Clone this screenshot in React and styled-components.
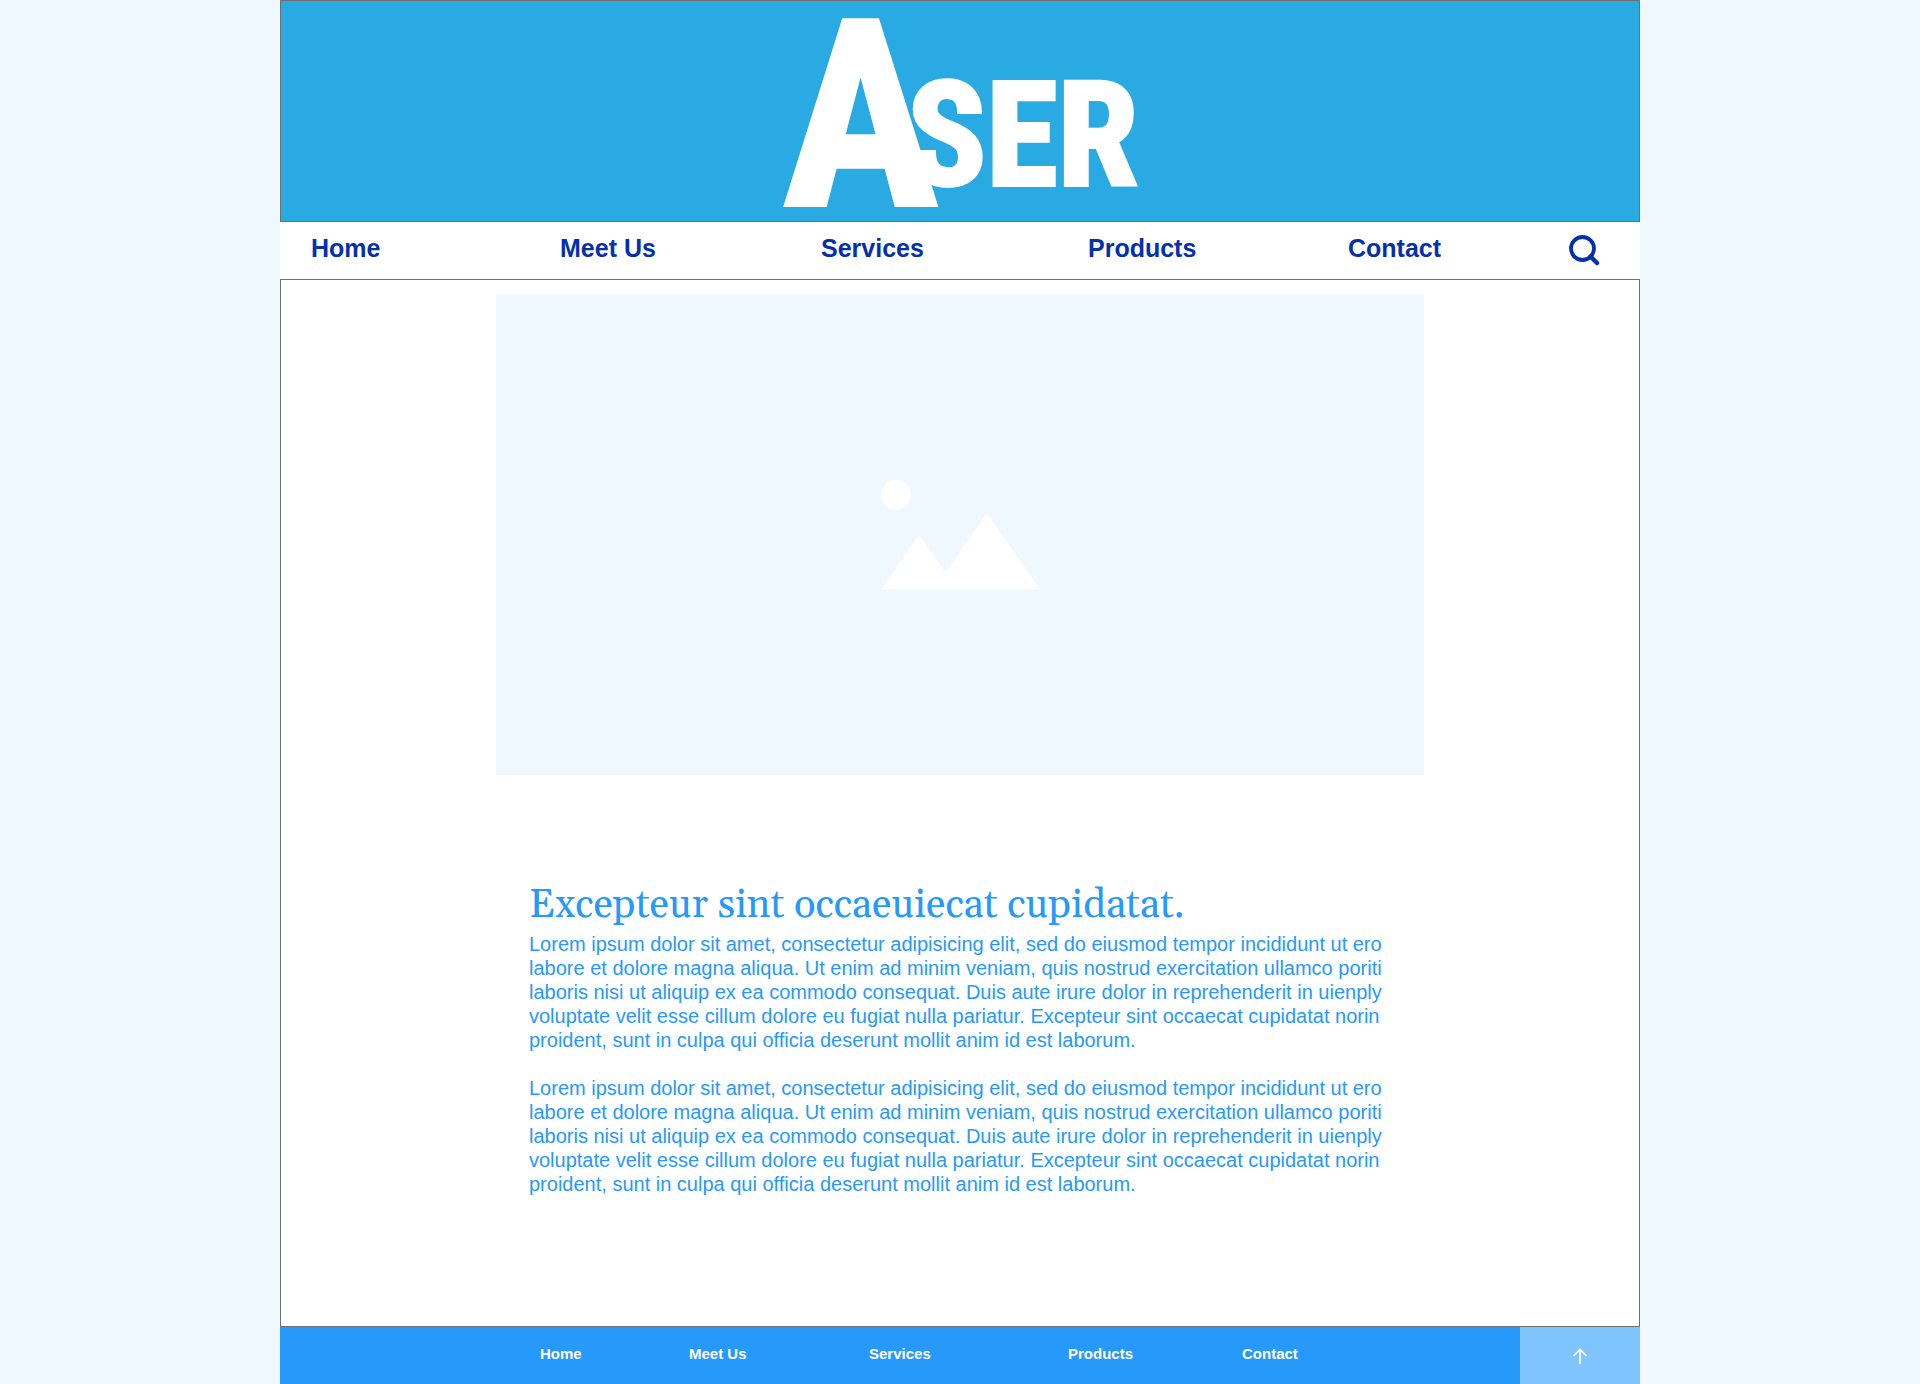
import React from "react";
import styled, { createGlobalStyle } from "styled-components";

const GlobalStyle = createGlobalStyle`
  *, *::before, *::after { box-sizing: border-box; }
  body {
    margin: 0;
    background: #f0f8ff;
    font-family: "Liberation Sans", Arial, sans-serif;
  }
`;

const Page = styled.div`
  display: flex;
  flex-direction: column;
  width: 100%;
  max-width: 1360px;
  min-height: 100vh;
  margin: 0 auto;
  background: #fff;
`;

const Header = styled.header`
  display: flex;
  justify-content: center;
  padding: 15px 0 14px;
  background: #29aae2;
  border: 1px solid #707070;
`;

const Logo = styled.a`
  display: flex;
  color: #fff;
  text-decoration: none;
`;

const LogoText = styled.text`
  fill: currentColor;
  stroke: currentColor;
  stroke-width: 4px;
  font-family: "Roboto Condensed", "Liberation Sans Narrow", "Liberation Sans", sans-serif;
  font-size: ${({ $size }) => $size}px;
  font-weight: 700;
`;

const TopNav = styled.nav`
  display: grid;
  grid-template-columns: 249fr 261fr 267fr 260fr 221fr 71fr;
  align-items: center;
  height: 57px;
  padding: 0 0 6px 31px;
`;

const TopLink = styled.a`
  justify-self: start;
  color: #0530ad;
  font-size: 25px;
  font-weight: 700;
  line-height: 28px;
  text-decoration: none;
`;

const SearchButton = styled.button`
  display: flex;
  justify-self: start;
  margin-top: 6px;
  padding: 0;
  background: none;
  border: 0;
  color: #0530ad;
  cursor: pointer;
`;

const Main = styled.main`
  display: flex;
  flex: 1;
  flex-direction: column;
  align-items: center;
  padding: 14px 14px 96px;
  border: 1px solid #707070;
`;

const Picture = styled.div`
  display: flex;
  align-items: center;
  justify-content: center;
  width: 100%;
  max-width: 928px;
  aspect-ratio: 928 / 481;
  background: #f0f8ff;
`;

const Article = styled.article`
  width: 100%;
  max-width: 928px;
  padding: 108px 33px 0;
  color: #2699fb;
`;

const Title = styled.h1`
  margin: 0 0 3px;
  font-family: Georgia, Gelasio, "Liberation Serif", serif;
  font-size: 40px;
  font-weight: 400;
  line-height: 46px;
`;

const Paragraph = styled.p`
  margin: 0 0 24px;
  font-size: 20px;
  line-height: 24px;
`;

const Footer = styled.footer`
  display: flex;
  height: 57px;
  background: #2699fb;
`;

const FooterNav = styled.nav`
  display: grid;
  flex: 1;
  grid-template-columns: 260fr 149fr 180fr 199fr 174fr 278fr;
  align-items: center;
  padding-bottom: 4px;
`;

const FooterLink = styled.a`
  justify-self: start;
  color: #fff;
  font-size: 15px;
  font-weight: 700;
  line-height: 18px;
  text-decoration: none;

  &:first-child {
    grid-column-start: 2;
  }
`;

const TopButton = styled.button`
  display: flex;
  align-items: center;
  justify-content: center;
  width: 120px;
  padding: 0;
  background: #7fc4fd;
  border: 0;
  color: #fff;
  cursor: pointer;
`;

const links = ["Home", "Meet Us", "Services", "Products", "Contact"];

const paragraph =
  "Lorem ipsum dolor sit amet, consectetur adipisicing elit, sed do eiusmod tempor incididunt ut ero labore et dolore magna aliqua. Ut enim ad minim veniam, quis nostrud exercitation ullamco poriti laboris nisi ut aliquip ex ea commodo consequat. Duis aute irure dolor in reprehenderit in uienply voluptate velit esse cillum dolore eu fugiat nulla pariatur. Excepteur sint occaecat cupidatat norin proident, sunt in culpa qui officia deserunt mollit anim id est laborum.";

const LogoMark = () => (
  <svg width="348" height="191" viewBox="0 0 348 191" overflow="visible">
    <LogoText $size={260} x="-3" y="189">A</LogoText>
    <LogoText $size={145} x="122" y="169">SER</LogoText>
  </svg>
);

const SearchIcon = () => (
  <svg width="31" height="31" viewBox="0 0 31 31" fill="none" stroke="currentColor" aria-hidden="true">
    <circle cx="13.5" cy="13.5" r="11.5" strokeWidth="3.8" />
    <path d="M21.500 21.500l6.500 6.500" strokeWidth="4.5" strokeLinecap="round" />
  </svg>
);

const LandscapeIcon = () => (
  <svg width="159" height="110" viewBox="0 0 159 110" fill="#fff" aria-hidden="true">
    <circle cx="15" cy="15" r="15" />
    <path d="M0 109.500L38 55L64.500 92.500L106 33L159 109.500Z" />
  </svg>
);

const ArrowUpIcon = () => (
  <svg width="16" height="16" viewBox="0 0 16 16" fill="none" stroke="currentColor" strokeWidth="1.7" aria-hidden="true">
    <path d="M8 16V2M1.500 8L8 1.500L14.500 8" />
  </svg>
);

export default function App() {
  return (
    <>
      <GlobalStyle />
      <Page>
        <Header>
          <Logo href="#home" aria-label="Aser">
            <LogoMark />
          </Logo>
        </Header>
        <TopNav aria-label="Main">
          {links.map((label) => (
            <TopLink key={label} href="#">{label}</TopLink>
          ))}
          <SearchButton type="button" aria-label="Search">
            <SearchIcon />
          </SearchButton>
        </TopNav>
        <Main>
          <Picture>
            <LandscapeIcon />
          </Picture>
          <Article>
            <Title>Excepteur sint occaeuiecat cupidatat.</Title>
            <Paragraph>{paragraph}</Paragraph>
            <Paragraph>{paragraph}</Paragraph>
          </Article>
        </Main>
        <Footer>
          <FooterNav aria-label="Footer">
            {links.map((label) => (
              <FooterLink key={label} href="#">{label}</FooterLink>
            ))}
          </FooterNav>
          <TopButton type="button" aria-label="Back to top">
            <ArrowUpIcon />
          </TopButton>
        </Footer>
      </Page>
    </>
  );
}
